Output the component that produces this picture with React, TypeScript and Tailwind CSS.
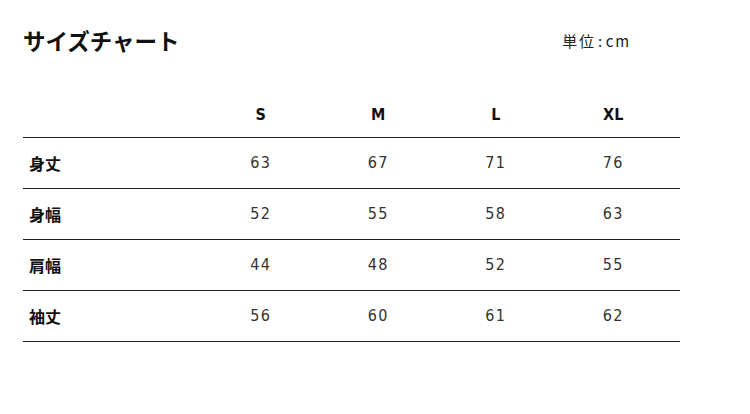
export default function App() {
  const cols = ["S", "M", "L", "XL"];
  const rows: [string, string[]][] = [
    ["身丈", ["63", "67", "71", "76"]],
    ["身幅", ["52", "55", "58", "63"]],
    ["肩幅", ["44", "48", "52", "55"]],
    ["袖丈", ["56", "60", "61", "62"]],
  ];
  const num = { fontFamily: '"DejaVu Sans Condensed", "Liberation Sans", sans-serif' };
  const jp = { fontFamily: '"Noto Sans CJK JP", "Noto Sans", sans-serif' };
  return (
    <div className="w-[750px] h-[414px] bg-white text-[#111]" style={jp}>
      <div className="flex items-center justify-between pl-[23px] pr-[119px] pt-[24px] h-[56px]">
        <h1 className="text-[22.5px] font-bold leading-none">サイズチャート</h1>
        <div className="text-[15px] leading-none tracking-[0.12em] text-[#222]">
          単位<span className="px-[2px]">:</span>cm
        </div>
      </div>
      <div className="ml-[23px] w-[657px] mt-[31px]">
        <div className="flex h-[51px] items-center pt-[5px] border-b border-[#222]">
          <div className="w-[179px]" />
          {cols.map((c) => (
            <div key={c} className="w-[117.5px] text-center text-[16px] font-bold" style={num}>
              {c}
            </div>
          ))}
        </div>
        {rows.map(([label, vals]) => (
          <div key={label} className="flex h-[51px] items-center border-b border-[#222]">
            <div className="w-[179px] pl-[6px] text-[16px] font-bold leading-none">{label}</div>
            {vals.map((v, i) => (
              <div key={i} className="w-[117.5px] text-center text-[16px] tracking-[0.08em] text-[#333]" style={num}>
                {v}
              </div>
            ))}
          </div>
        ))}
      </div>
    </div>
  );
}
